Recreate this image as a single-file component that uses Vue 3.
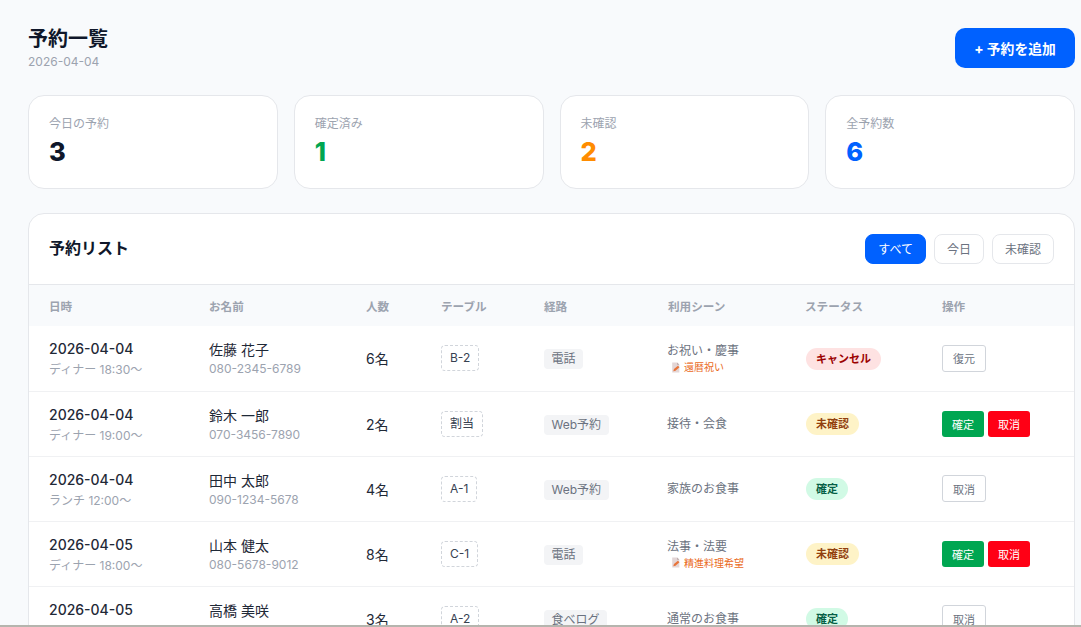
<script setup>
const stats = [
  { label: '今日の予約', value: 3, cls: 'ink' },
  { label: '確定済み', value: 1, cls: 'green' },
  { label: '未確認', value: 2, cls: 'orange' },
  { label: '全予約数', value: 6, cls: 'blue' }
]
const filters = ['すべて', '今日', '未確認']
const heads = ['日時', 'お名前', '人数', 'テーブル', '経路', '利用シーン', 'ステータス', '操作']
const rows = [
  { date: '2026-04-04', time: 'ディナー 18:30〜', name: '佐藤 花子', tel: '080-2345-6789', n: '6名', table: 'B-2', route: '電話', scene: 'お祝い・慶事', note: '還暦祝い', status: 'キャンセル', st: 'cancel', ops: ['復元'] },
  { date: '2026-04-04', time: 'ディナー 19:00〜', name: '鈴木 一郎', tel: '070-3456-7890', n: '2名', table: '割当', route: 'Web予約', scene: '接待・会食', status: '未確認', st: 'pending', ops: ['確定', '取消'] },
  { date: '2026-04-04', time: 'ランチ 12:00〜', name: '田中 太郎', tel: '090-1234-5678', n: '4名', table: 'A-1', route: 'Web予約', scene: '家族のお食事', status: '確定', st: 'ok', ops: ['取消'] },
  { date: '2026-04-05', time: 'ディナー 18:00〜', name: '山本 健太', tel: '080-5678-9012', n: '8名', table: 'C-1', route: '電話', scene: '法事・法要', note: '精進料理希望', status: '未確認', st: 'pending', ops: ['確定', '取消'] },
  { date: '2026-04-05', time: 'ランチ 12:30〜', name: '高橋 美咲', tel: '090-4567-8901', n: '3名', table: 'A-2', route: '食べログ', scene: '通常のお食事', status: '確定', st: 'ok', ops: ['取消'] }
]
</script>

<template>
  <div class="page">
    <header class="top">
      <div>
        <h1>予約一覧</h1>
        <p class="today">2026-04-04</p>
      </div>
      <button class="add">+ 予約を追加</button>
    </header>

    <section class="stats">
      <div v-for="s in stats" :key="s.label" class="stat">
        <div class="stat-label">{{ s.label }}</div>
        <div class="stat-value" :class="s.cls">{{ s.value }}</div>
      </div>
    </section>

    <section class="panel">
      <div class="panel-head">
        <h2>予約リスト</h2>
        <div class="filters">
          <button v-for="(f, i) in filters" :key="f" class="filter" :class="{ active: i === 0 }">{{ f }}</button>
        </div>
      </div>
      <table>
        <colgroup>
          <col class="c1" /><col class="c2" /><col class="c3" /><col class="c4" />
          <col class="c5" /><col class="c6" /><col class="c7" /><col />
        </colgroup>
        <thead>
          <tr><th v-for="h in heads" :key="h">{{ h }}</th></tr>
        </thead>
        <tbody>
          <tr v-for="r in rows" :key="r.tel">
            <td>
              <div class="date">{{ r.date }}</div>
              <div class="time">{{ r.time }}</div>
            </td>
            <td>
              <div class="name">{{ r.name }}</div>
              <div class="tel">{{ r.tel }}</div>
            </td>
            <td class="num">{{ r.n }}</td>
            <td><span class="tbl">{{ r.table }}</span></td>
            <td><span class="route">{{ r.route }}</span></td>
            <td>
              <div class="scene">{{ r.scene }}</div>
              <div v-if="r.note" class="note">
                <svg class="memo" viewBox="0 0 10 10" width="11" height="11" aria-hidden="true">
                  <path d="M2 0.5h4.5L8.5 2.5V9.5H2z" fill="#e3d6d6" />
                  <path d="M6.5 0.5L8.5 2.5H6.5z" fill="#b9a6a6" />
                  <path d="M3 8.5L3.6 6.4L7.2 3.4L8.6 4.8L5 8z" fill="#e8743a" />
                </svg>
                <span>{{ r.note }}</span>
              </div>
            </td>
            <td><span class="pill" :class="r.st">{{ r.status }}</span></td>
            <td>
              <div class="ops">
                <button
                  v-for="o in r.ops"
                  :key="o"
                  class="op"
                  :class="r.ops.length === 1 ? 'plain' : o === '確定' ? 'go' : 'stop'"
                >{{ o }}</button>
              </div>
            </td>
          </tr>
        </tbody>
      </table>
    </section>
    <div class="edge"></div>
  </div>
</template>

<style>
html, body { margin: 0; height: 627px; overflow: hidden; background: #f8fafc; }
</style>

<style scoped>
.page {
  height: 627px;
  box-sizing: border-box;
  padding: 28px 6px 0 28px;
  overflow: hidden;
  background: #f8fafc;
  font-family: Inter, "Noto Sans CJK JP", sans-serif;
  color: #111827;
}
.top { display: flex; justify-content: space-between; align-items: flex-start; }
h1 { margin: 0; font-size: 20px; line-height: 22px; font-weight: 700; color: #0f172a; }
.today { margin: 3px 0 0; font-size: 12px; line-height: 18px; color: #9ca3af; }
button { font-family: inherit; cursor: pointer; }
.add {
  width: 120px; height: 40px; padding: 0; border: 0; border-radius: 10px;
  background: #0061ff; color: #fff; font-size: 13.8px; font-weight: 700;
}
.stats { display: grid; grid-template-columns: repeat(4, 1fr); gap: 16px; margin-top: 24px; }
.stat {
  height: 94px; box-sizing: border-box; padding: 20px;
  background: #fff; border: 1px solid #e5e7eb; border-radius: 16px;
}
.stat-label { font-size: 12px; line-height: 16px; color: #9ca3af; }
.stat-value { margin-top: 4px; font-size: 25.5px; line-height: 32px; font-weight: 800; }
.ink { color: #0f172a; }
.green { color: #00a651; }
.orange { color: #ff8c00; }
.blue { color: #0061ff; }
.panel {
  margin-top: 24px; background: #fff; border: 1px solid #e5e7eb;
  border-radius: 16px 16px 0 0; overflow: hidden;
}
.panel-head {
  height: 71px; box-sizing: border-box; padding: 0 20px 1px;
  display: flex; justify-content: space-between; align-items: center;
  border-bottom: 1px solid #e5e7eb;
}
h2 { margin: 0 0 3px; font-size: 16px; font-weight: 700; color: #0f172a; }
.filters { display: flex; gap: 8px; }
.filter {
  height: 30px; padding: 0 12px; border: 1px solid #e5e7eb; border-radius: 8px;
  background: #fff; color: #6b7280; font-size: 12px;
}
.filter.active { background: #0061ff; border-color: #0061ff; color: #fff; }
table { width: 100%; table-layout: fixed; border-collapse: collapse; }
.c1 { width: 160px; } .c2 { width: 157px; } .c3 { width: 75px; } .c4 { width: 103px; }
.c5 { width: 124px; } .c6 { width: 137px; } .c7 { width: 137px; }
th {
  height: 41px; padding: 0 0 0 20px; background: #f8fafc; text-align: left;
  font-size: 11.6px; font-weight: 600; color: #9ca3af;
}
td { height: 65px; box-sizing: border-box; padding: 0 0 0 20px; border-top: 1px solid #f0f1f3; vertical-align: middle; }
tbody tr:first-child td { border-top: 0; }
.date { padding-top: 3px; font-size: 14px; line-height: 20px; font-weight: 500; color: #1f2937; }
.time { margin-top: 1px; font-size: 12px; line-height: 20px; color: #9ca3af; }
.name { padding-top: 1px; font-size: 14px; line-height: 20px; color: #1f2937; }
.tel { margin-top: 1px; font-size: 12px; line-height: 16px; color: #9ca3af; }
.num { font-size: 14px; color: #1f2937; }
.tbl {
  display: inline-block; padding: 4px 8px; border: 1px dashed #d1d5db; border-radius: 4px;
  font-size: 12px; line-height: 16px; color: #374151;
}
.route {
  display: inline-block; padding: 2px 7.5px; border-radius: 4px; background: #f3f4f6;
  font-size: 12px; line-height: 16px; color: #6b7280;
}
.scene { margin-left: -1px; font-size: 12px; line-height: 18px; color: #6b7280; }
.note { display: flex; align-items: center; gap: 3px; font-size: 10px; line-height: 14px; color: #ea6a1c; padding-left: 2px; }
.memo { flex: none; }
.pill {
  display: inline-block; margin-left: 1px; padding: 3px 10px; border-radius: 99px;
  font-size: 11px; line-height: 16px; font-weight: 700;
}
.cancel { background: #fee2e2; color: #9b0000; }
.pending { background: #fef3c7; color: #92400e; }
.ok { background: #d1fae5; color: #065f46; }
.ops { display: flex; gap: 4px; }
.op { height: 26px; width: 42px; padding: 0; border: 0; border-radius: 3px; font-size: 11px; }
.plain { width: 44px; height: 27px; background: #fff; border: 1px solid #d1d5db; color: #6b7280; }
.go { background: #00a651; color: #fff; }
.stop { background: #ff0015; color: #fff; }
.edge { position: fixed; left: 0; right: 0; bottom: 0; height: 2px; background: #b5b5ae; }
</style>
